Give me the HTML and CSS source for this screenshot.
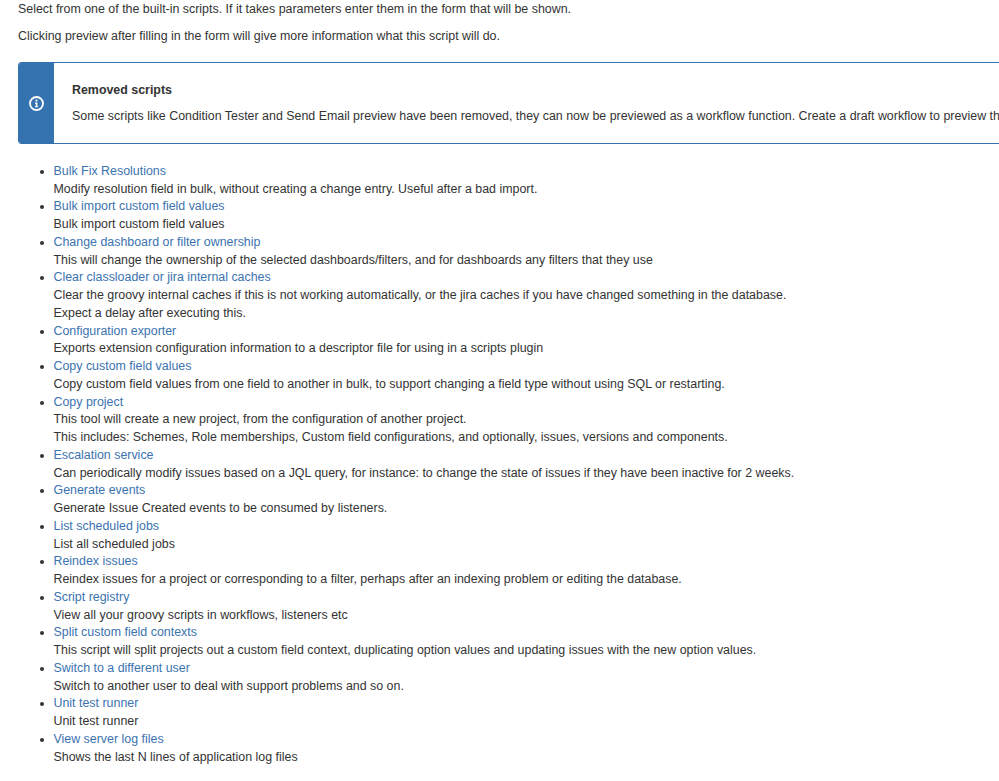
FILE: index.html
```html
<!DOCTYPE html>
<html lang="en">
<head>
<meta charset="utf-8">
<title>Built-in scripts</title>
<link rel="stylesheet" href="styles.css">
</head>
<body>
<p class="intro">Select from one of the built-in scripts. If it takes parameters enter them in the form that will be shown.</p>
<p class="intro">Clicking preview after filling in the form will give more information what this script will do.</p>
<div class="notice">
  <div class="notice-icon">
    <svg viewBox="0 0 16 16" width="15" height="15" aria-hidden="true">
      <circle cx="8" cy="8" r="6.9" fill="none" stroke="#fff" stroke-width="2"/>
      <circle cx="8" cy="4.9" r="1.2" fill="#fff"/>
      <path d="M6.4 6.9h2.6v3.9h.8v1.3H6.3v-1.3h.9V8.2h-.8z" fill="#fff"/>
    </svg>
  </div>
  <div class="notice-body">
    <p class="notice-title">Removed scripts</p>
    <p class="notice-text">Some scripts like Condition Tester and Send Email preview have been removed, they can now be previewed as a workflow function. Create a draft workflow to preview them.</p>
  </div>
</div>
<ul class="scripts">
  <li><a href="#">Bulk Fix Resolutions</a><br>Modify resolution field in bulk, without creating a change entry. Useful after a bad import.</li>
  <li><a href="#">Bulk import custom field values</a><br>Bulk import custom field values</li>
  <li><a href="#">Change dashboard or filter ownership</a><br>This will change the ownership of the selected dashboards/filters, and for dashboards any filters that they use</li>
  <li><a href="#">Clear classloader or jira internal caches</a><br>Clear the groovy internal caches if this is not working automatically, or the jira caches if you have changed something in the database.<br>Expect a delay after executing this.</li>
  <li><a href="#">Configuration exporter</a><br>Exports extension configuration information to a descriptor file for using in a scripts plugin</li>
  <li><a href="#">Copy custom field values</a><br>Copy custom field values from one field to another in bulk, to support changing a field type without using SQL or restarting.</li>
  <li><a href="#">Copy project</a><br>This tool will create a new project, from the configuration of another project.<br>This includes: Schemes, Role memberships, Custom field configurations, and optionally, issues, versions and components.</li>
  <li><a href="#">Escalation service</a><br>Can periodically modify issues based on a JQL query, for instance: to change the state of issues if they have been inactive for 2 weeks.</li>
  <li><a href="#">Generate events</a><br>Generate Issue Created events to be consumed by listeners.</li>
  <li><a href="#">List scheduled jobs</a><br>List all scheduled jobs</li>
  <li><a href="#">Reindex issues</a><br>Reindex issues for a project or corresponding to a filter, perhaps after an indexing problem or editing the database.</li>
  <li><a href="#">Script registry</a><br>View all your groovy scripts in workflows, listeners etc</li>
  <li><a href="#">Split custom field contexts</a><br>This script will split projects out a custom field context, duplicating option values and updating issues with the new option values.</li>
  <li><a href="#">Switch to a different user</a><br>Switch to another user to deal with support problems and so on.</li>
  <li><a href="#">Unit test runner</a><br>Unit test runner</li>
  <li><a href="#">View server log files</a><br>Shows the last N lines of application log files</li>
</ul>
</body>
</html>
```
FILE: styles.css
```css
html, body {
  height: 100%;
  overflow: hidden;
}
body {
  margin: 0;
  padding: 1px 0 0 18px;
  background: #fff;
  color: #333;
  font-family: "Liberation Sans", Arial, sans-serif;
  font-size: 12.42px;
  line-height: 17.78px;
}
p {
  margin: 0;
}
.intro {
  margin-bottom: 8.9px;
}
.notice {
  display: flex;
  width: 1400px;
  height: 82px;
  margin-top: 16.8px;
  box-sizing: border-box;
  border: 1px solid #3572b0;
  border-radius: 3px;
  overflow: hidden;
}
.notice-icon {
  flex: none;
  width: 35px;
  display: flex;
  align-items: center;
  justify-content: center;
  background: #3572b0;
}
.notice-body {
  padding: 18.5px 18px;
}
.notice-title {
  font-weight: 700;
  color: #333;
  margin-bottom: 8.9px;
}
.scripts {
  margin: 18.6px 0 0;
  padding: 0 0 0 35.5px;
  line-height: 17.75px;
  white-space: nowrap;
}
a {
  color: #3b73af;
  text-decoration: none;
}
```
